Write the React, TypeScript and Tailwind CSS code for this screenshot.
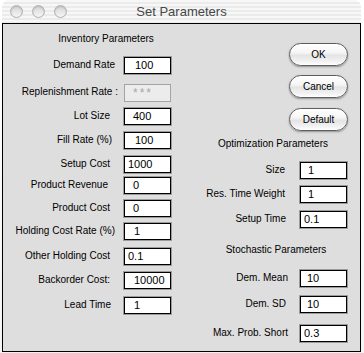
import React from 'react';

type Row = { label: string; value: string; mt: string; pr: string; pl: string; disabled?: boolean };

const inventory: Row[] = [
  { label: 'Demand Rate', value: '100', mt: 'mt-[12px]', pr: 'pr-[9px]', pl: 'pl-[10px]' },
  { label: 'Replenishment Rate :', value: '***', mt: 'mt-[10px]', pr: 'pr-[6px]', pl: 'pl-[8px]', disabled: true },
  { label: 'Lot Size', value: '400', mt: 'mt-[7px]', pr: 'pr-[14px]', pl: 'pl-[8px]' },
  { label: 'Fill Rate (%)', value: '100', mt: 'mt-[7px]', pr: 'pr-[12px]', pl: 'pl-[10px]' },
  { label: 'Setup Cost', value: '1000', mt: 'mt-[7px]', pr: 'pr-[14px]', pl: 'pl-[3px]' },
  { label: 'Product Revenue', value: '0', mt: 'mt-[4px]', pr: 'pr-[16px]', pl: 'pl-[8px]' },
  { label: 'Product Cost', value: '0', mt: 'mt-[6px]', pr: 'pr-[14px]', pl: 'pl-[8px]' },
  { label: 'Holding Cost Rate (%)', value: '1', mt: 'mt-[6px]', pr: 'pr-[9px]', pl: 'pl-[9px]' },
  { label: 'Other Holding Cost', value: '0.1', mt: 'mt-[8px]', pr: 'pr-[14px]', pl: 'pl-[3px]' },
  { label: 'Backorder Cost:', value: '10000', mt: 'mt-[7px]', pr: 'pr-[14px]', pl: 'pl-[9px]' },
  { label: 'Lead Time', value: '1', mt: 'mt-[8px]', pr: 'pr-[13px]', pl: 'pl-[9px]' },
];

const optimization: Row[] = [
  { label: 'Size', value: '1', mt: 'mt-[12px]', pr: 'pr-[15px]', pl: 'pl-[7px]' },
  { label: 'Res. Time Weight', value: '1', mt: 'mt-[7px]', pr: 'pr-[15px]', pl: 'pl-[7px]' },
  { label: 'Setup Time', value: '0.1', mt: 'mt-[8px]', pr: 'pr-[14px]', pl: 'pl-[3px]' },
];

const stochastic: Row[] = [
  { label: 'Dem. Mean', value: '10', mt: 'mt-[14px]', pr: 'pr-[12px]', pl: 'pl-[6px]' },
  { label: 'Dem. SD', value: '10', mt: 'mt-[9px]', pr: 'pr-[14px]', pl: 'pl-[6px]' },
  { label: 'Max. Prob. Short', value: '0.3', mt: 'mt-[12px]', pr: 'pr-[12px]', pl: 'pl-[3px]' },
];

const Field = ({ row, labelW }: { row: Row; labelW: string }) => (
  <div className={`flex items-center h-[17px] ${row.mt}`}>
    <div className={`${labelW} ${row.pr} text-right text-[10px] leading-[12px] text-black whitespace-nowrap -mt-[1px]`}>
      {row.label}
    </div>
    {row.disabled ? (
      <div className={`w-[47px] h-[18px] border border-[#a4a4a4] bg-[#ececec] text-[12px] leading-[16px] tracking-[2px] text-[#a8a8a8] ${row.pl}`}>
        {row.value}
      </div>
    ) : (
      <div
        className={`w-[47px] h-[17px] border border-black bg-white shadow-[0_0_0_1px_#9c9c9c] text-[11px] leading-[15px] text-black ${row.pl}`}
      >
        {row.value}
      </div>
    )}
  </div>
);

const AquaButton = ({ label, mt }: { label: string; mt: string }) => (
  <div
    className={`${mt} w-[59px] h-[23px] rounded-full border border-[#5e5e5e] bg-[linear-gradient(to_bottom,#ffffff_0%,#f6f6f6_40%,#e4e4e4_55%,#f3f3f3_85%,#ffffff_100%)] shadow-[0_1px_2px_rgba(0,0,0,0.35)] flex items-center justify-center text-[10px] text-black`}
  >
    {label}
  </div>
);

const Light = () => (
  <div className="w-[13px] h-[13px] rounded-full border border-[#b0b0b0] bg-[linear-gradient(to_bottom,#d6d6d6,#f6f6f6)] shadow-[inset_0_1px_2px_rgba(0,0,0,0.15)]" />
);

export default function App() {
  return (
    <div className="w-[364px] h-[353px] overflow-hidden bg-[linear-gradient(to_bottom,#ffffff,#f4f4f4)] font-['Liberation_Sans',Arial,sans-serif]">
      <div className="ml-[2px] w-[359px]">
        {/* title bar */}
        <div className="h-[23px] rounded-t-[7px] grid grid-cols-[1fr_auto_1fr] items-center bg-[repeating-linear-gradient(to_bottom,#f7f7f7_0px,#f7f7f7_2px,#ebebeb_2px,#ebebeb_4px)]">
          <div className="flex items-center gap-[9px] pl-[8px]">
            <Light />
            <Light />
            <Light />
          </div>
          <div className="text-[13px] text-[#474747] pt-[1px]">Set Parameters</div>
          <div />
        </div>

        {/* dialog body */}
        <div className="h-[329px] border border-black bg-[#dedede] flex">
          <div className="w-[175px]">
            <div className="mt-[9px] pl-[31px] text-center text-[10px] leading-[12px] text-black">Inventory Parameters</div>
            {inventory.map((r) => (
              <Field key={r.label} row={r} labelW="w-[121px]" />
            ))}
          </div>

          <div className="w-[182px]">
            <div className="flex flex-col pl-[111px]">
              <AquaButton label="OK" mt="mt-[19px]" />
              <AquaButton label="Cancel" mt="mt-[9px]" />
              <AquaButton label="Default" mt="mt-[10px]" />
            </div>
            <div className="mt-[7px] pl-[8px] text-center text-[10px] leading-[12px] text-black">Optimization Parameters</div>
            {optimization.map((r) => (
              <Field key={r.label} row={r} labelW="w-[122px]" />
            ))}
            <div className="mt-[16px] pl-[14px] text-center text-[10px] leading-[12px] text-black">Stochastic Parameters</div>
            {stochastic.map((r) => (
              <Field key={r.label} row={r} labelW="w-[122px]" />
            ))}
          </div>
        </div>
      </div>
    </div>
  );
}
